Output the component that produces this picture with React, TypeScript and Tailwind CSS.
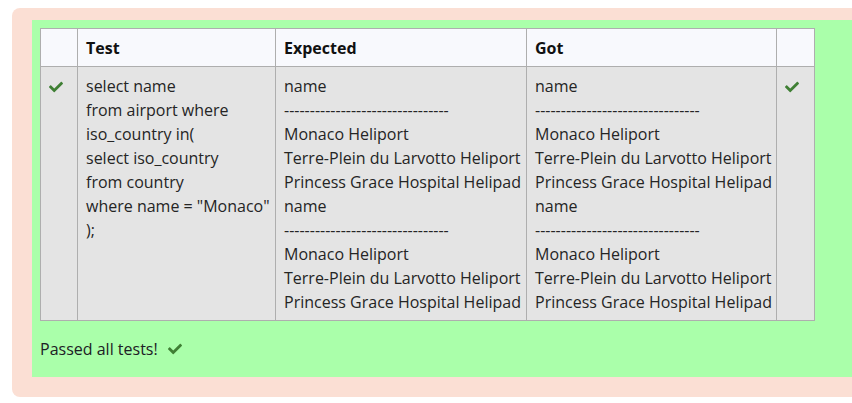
import { FaCheck } from "react-icons/fa"

const dashes = "--------------------------------"

const test = [
  "select name",
  "from airport where",
  "iso_country in(",
  "select iso_country",
  "from country",
  'where name = "Monaco"',
  ");",
]

const result = [
  "name",
  dashes,
  "Monaco Heliport",
  "Terre-Plein du Larvotto Heliport",
  "Princess Grace Hospital Helipad",
  "name",
  dashes,
  "Monaco Heliport",
  "Terre-Plein du Larvotto Heliport",
  "Princess Grace Hospital Helipad",
]

function Lines({ lines }: { lines: string[] }) {
  return (
    <div>
      {lines.map((l, i) => (
        <div key={i} className="whitespace-pre">
          {l}
        </div>
      ))}
    </div>
  )
}

function Tick() {
  return <FaCheck className="inline-block text-[#3f7f34]" size={14} />
}

export default function App() {
  return (
    <div
      className="w-[852px] h-[403px] overflow-hidden bg-white text-[16px] leading-6 text-[#1d2125]"
      style={{ fontFamily: '"Open Sans", "Noto Sans", sans-serif' }}
    >
      <div className="ml-[12px] mt-[8px] w-[900px] rounded-lg bg-[#fbdfd4] pt-[12px] pb-[20px] pl-[20px]">
        <div className="bg-[#aaffaa] pt-[8px] pl-[8px] pb-[16px]">
          <table className="table-fixed w-[774px] border-collapse border border-[#aeaeae] mb-[16px]">
            <thead>
              <tr className="bg-[#f8f9fd] font-bold text-left text-[#111]">
                <th className="w-[37px] border border-[#aeaeae] px-2 py-[6.5px]"></th>
                <th className="w-[198px] border border-[#aeaeae] px-2 py-[6.5px] text-left">Test</th>
                <th className="w-[251px] border border-[#aeaeae] px-2 py-[6.5px] text-left">Expected</th>
                <th className="w-[250px] border border-[#aeaeae] px-2 py-[6.5px] text-left">Got</th>
                <th className="w-[38px] border border-[#aeaeae] px-2 py-[6.5px]"></th>
              </tr>
            </thead>
            <tbody>
              <tr className="bg-[#e4e4e4] align-top text-[#252525]">
                <td className="border border-[#aeaeae] px-2 py-[6.5px]">
                  <Tick />
                </td>
                <td className="border border-[#aeaeae] px-2 py-[6.5px]">
                  <Lines lines={test} />
                </td>
                <td className="border border-[#aeaeae] px-2 py-[6.5px]">
                  <Lines lines={result} />
                </td>
                <td className="border border-[#aeaeae] px-2 py-[6.5px]">
                  <Lines lines={result} />
                </td>
                <td className="border border-[#aeaeae] px-2 py-[6.5px]">
                  <Tick />
                </td>
              </tr>
            </tbody>
          </table>
          <div className="flex items-center gap-[10px]">
            <span>Passed all tests!</span>
            <Tick />
          </div>
        </div>
      </div>
    </div>
  )
}
